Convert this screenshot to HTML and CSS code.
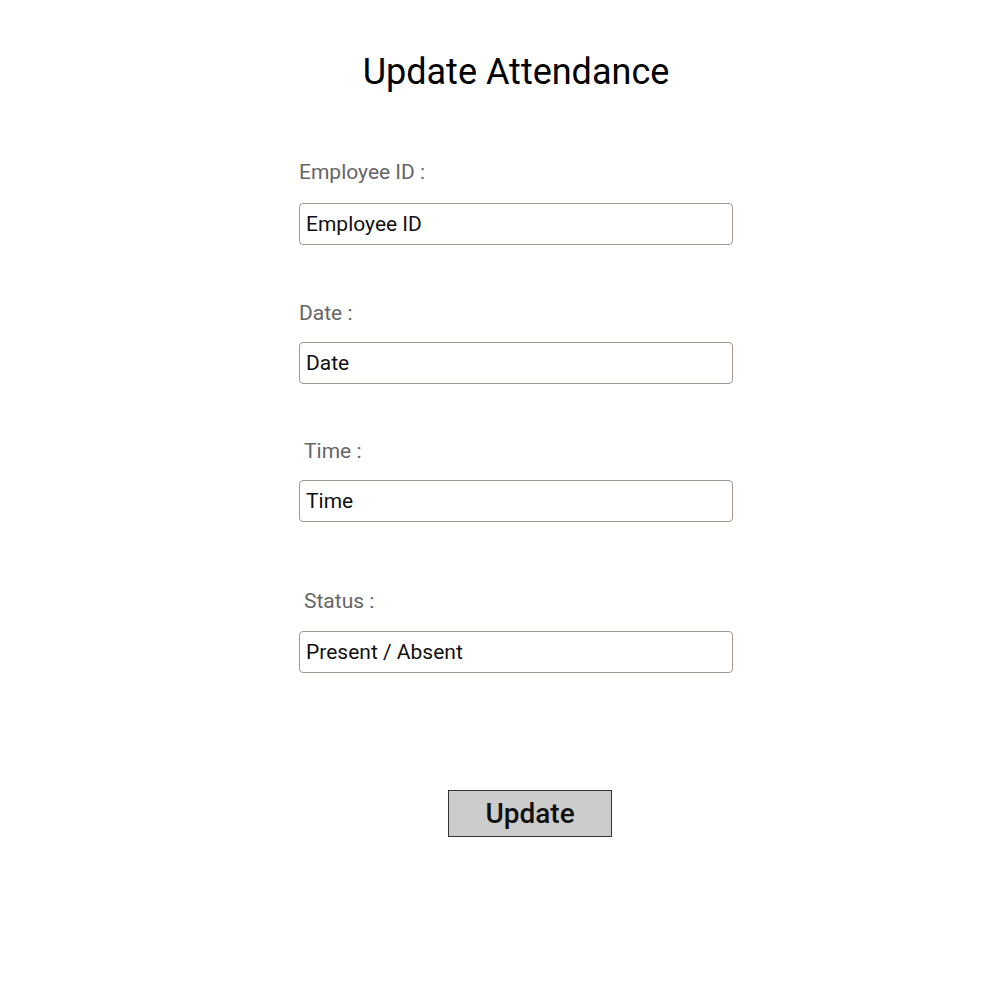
FILE: index.html
```html
<!DOCTYPE html>
<html>
<head>
<meta charset="utf-8">
<title>Update Attendance</title>
<link rel="stylesheet" href="styles.css">
</head>
<body>
<main class="form">
  <h1 class="title">Update Attendance</h1>
  <div class="field field-id">
    <label class="label">Employee ID :</label>
    <div class="input">Employee ID</div>
  </div>
  <div class="field field-date">
    <label class="label">Date :</label>
    <div class="input">Date</div>
  </div>
  <div class="field field-time">
    <label class="label label-indent">Time :</label>
    <div class="input">Time</div>
  </div>
  <div class="field field-status">
    <label class="label label-indent">Status :</label>
    <div class="input">Present / Absent</div>
  </div>
  <div class="actions">
    <button class="btn">Update</button>
  </div>
</main>
</body>
</html>
```
FILE: styles.css
```css
html, body {
  margin: 0;
  padding: 0;
  background: #fff;
}
body {
  font-family: Roboto, "Liberation Sans", sans-serif;
  width: 1000px;
  height: 1000px;
}
.form {
  display: flex;
  flex-direction: column;
  width: 434px;
  margin-left: 299px;
  padding-top: 52px;
}
.title {
  margin: 0;
  font-size: 36px;
  font-weight: 400;
  line-height: 40px;
  text-align: center;
  color: #000;
}
.field {
  display: flex;
  flex-direction: column;
}
.field-id { margin-top: 68px; }
.field-date { margin-top: 56px; }
.field-time { margin-top: 55px; }
.field-status { margin-top: 67px; }
.label {
  font-size: 21px;
  line-height: 24px;
  color: #666;
  margin-bottom: 18px;
}
.field-id .label { margin-bottom: 19px; }
.field-date .label, .field-time .label { margin-bottom: 17px; }
.label-indent { padding-left: 5px; }
.input {
  box-sizing: border-box;
  height: 42px;
  border: 1px solid #a09890;
  border-radius: 4px;
  padding: 1px 6px 0;
  font-size: 21px;
  line-height: 39px;
  color: #111;
}
.actions {
  display: flex;
  justify-content: flex-start;
  margin-top: 117px;
  padding-left: 149px;
}
.btn {
  box-sizing: border-box;
  width: 164px;
  height: 47px;
  background: #cccccc;
  border: 1px solid #333;
  border-radius: 0;
  font-family: Roboto, "Liberation Sans", sans-serif;
  font-size: 28px;
  font-weight: 500;
  color: #111;
  padding: 0;
  line-height: 46px;
}
```
